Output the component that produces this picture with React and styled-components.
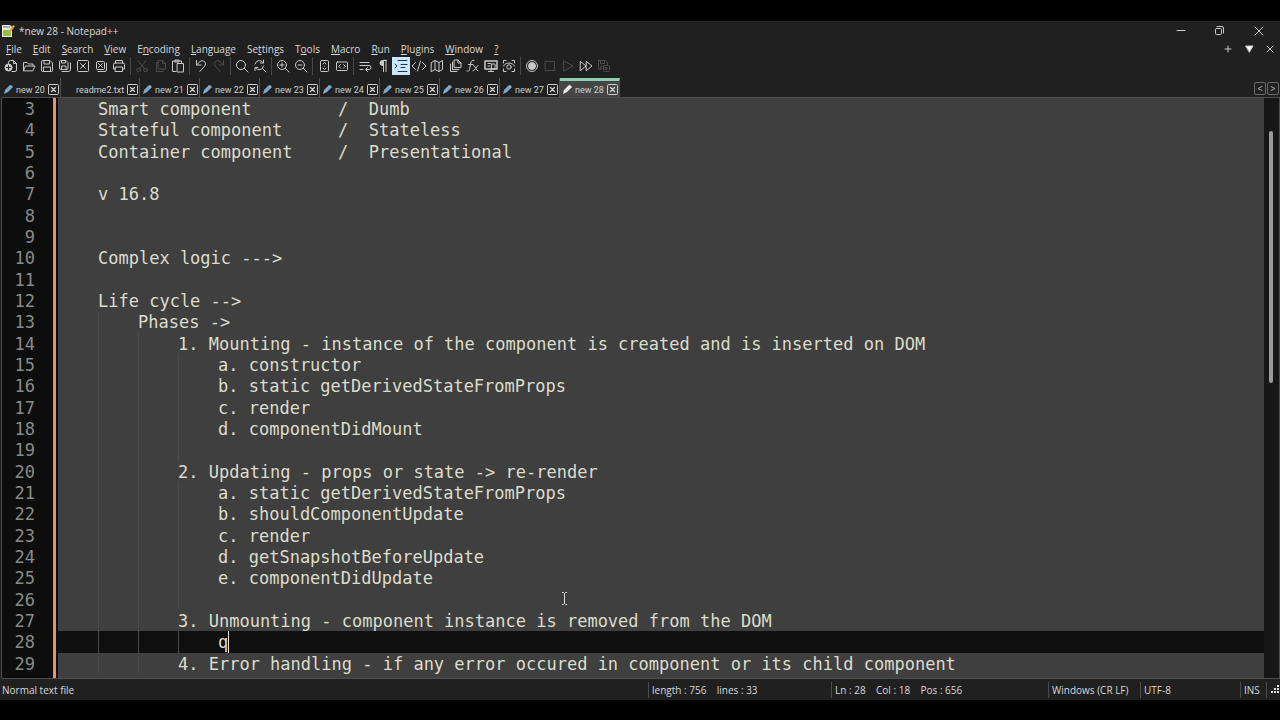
import React from 'react';
import styled, { createGlobalStyle, ThemeProvider, css } from 'styled-components';

const theme = {
    chrome: '#202020',
    text: '#d8d8d8',
    line: '#4d4d4d',
    paper: '#3f3f3f',
    ink: '#dcdccc',
    gutter: '#0d0d0d',
    number: '#8a8a86',
    accent: '#ec9550',
    ui: '"Open Sans", "Noto Sans", sans-serif',
    mono: '"DejaVu Sans Mono", "Liberation Mono", monospace',
}

const GlobalStyle = createGlobalStyle`
    * {
        box-sizing: border-box;
    }
    body {
        margin: 0;
        background: #000;
    }
    button {
        padding: 0;
        border: 0;
        background: none;
        color: inherit;
        font: inherit;
    }
`

const Screen = styled.div`
    display: flex;
    flex-direction: column;
    height: 100vh;
    padding: 21px 0 20px;
    overflow: hidden;
    color: ${p => p.theme.text};
    font-family: ${p => p.theme.ui};
    font-size: 10px;
`

const Window = styled.main`
    flex: 1;
    min-height: 0;
    display: flex;
    flex-direction: column;
    background: ${p => p.theme.chrome};
`

const Bar = styled.header`
    display: flex;
    flex: none;
    align-items: center;
    justify-content: space-between;
    height: ${p => p.h}px;
`

const Title = styled.h1`
    display: flex;
    align-items: center;
    gap: 4px;
    margin: 0;
    padding-left: 1px;
    font-size: 10px;
    font-weight: 400;
    line-height: 16px;
`

const Controls = styled.div`
    display: flex;
    align-items: center;
    gap: ${p => p.gap}px;
    padding-right: ${p => p.end}px;
`

const IconButton = styled.button`
    display: flex;
    align-items: center;
    justify-content: center;
    width: ${p => p.w || 18}px;
    height: 18px;
    color: ${p => p.$dim ? '#4c4c4c' : '#c9c9c9'};
    ${p => p.$active && css`
        background: #cce6ff;
        color: #223344;
    `}
`

const Menu = styled.nav`
    display: flex;
    gap: 11px;
    padding-left: 6px;
`

const MenuItem = styled.button`
    line-height: 14px;
`

const Toolbar = styled.div`
    display: flex;
    flex: none;
    align-items: center;
    height: 20px;
    padding-left: 2px;
`

const Group = styled.div`
    display: flex;
    & + & {
        margin-left: 2px;
        padding-left: 2px;
        border-left: 1px solid #484848;
    }
`

const TabBar = styled.div`
    display: flex;
    flex: none;
    align-items: flex-end;
    justify-content: space-between;
    height: 21px;
    padding-left: 1px;
`

const TabList = styled.div`
    display: flex;
`

const Tab = styled.div`
    display: flex;
    align-items: center;
    width: ${p => p.w}px;
    height: 19px;
    padding: 4px 1px 0 2px;
    border-right: 1px solid ${p => p.theme.line};
    color: #cfcfcf;
    font-family: Roboto, "Liberation Sans", sans-serif;
    ${p => p.$active && css`
        padding-top: 1px;
        border-top: 3px solid #8fd0b4;
        background: #454545;
    `}
`

const TabName = styled.button`
    display: flex;
    flex: 1;
    align-items: center;
    gap: 2px;
    font-size: 9px;
    line-height: 12px;
    white-space: nowrap;
`

const CloseTab = styled.button`
    display: flex;
    flex: none;
`

const Scrollers = styled.div`
    display: flex;
    gap: 1px;
    padding: 0 1px 2px 0;
`

const Scroller = styled.button`
    display: flex;
    align-items: center;
    justify-content: center;
    width: 12px;
    height: 13px;
    border: 1px solid #6a6a6a;
    border-radius: 2px;
    color: #a8a8a8;
`

const Editor = styled.section`
    position: relative;
    display: flex;
    flex: 1;
    min-height: 0;
    margin-left: 1px;
    border: 1px solid ${p => p.theme.line};
    background: ${p => p.theme.paper};
`

const Lines = styled.ol`
    display: grid;
    flex: 1;
    grid-auto-rows: minmax(0, 1fr);
    margin: 0;
    padding: 0 0 4px;
    list-style: none;
    background: linear-gradient(to right,
        ${p => p.theme.gutter} 51px,
        ${p => p.theme.accent} 51px,
        ${p => p.theme.accent} 54px,
        ${p => p.theme.gutter} 54px,
        ${p => p.theme.gutter} 56px,
        transparent 56px);
    font-family: ${p => p.theme.mono};
    font-size: 17px;
`

const Line = styled.li`
    display: flex;
    align-items: stretch;
    line-height: 23px;
    white-space: pre;
    tab-size: 40px;
`

const Num = styled.span`
    flex: none;
    width: 56px;
    padding-right: 23px;
    color: ${p => p.theme.number};
    text-align: right;
`

const Code = styled.code`
    display: flex;
    flex: 1;
    background: ${p => p.$current ? '#101010' : 'transparent'};
    color: ${p => p.theme.ink};
    font: inherit;
`

const Indent = styled.span`
    width: 40px;
    border-left: 1px solid transparent;
    & + & {
        border-color: #4a4a4a;
    }
`

const Caret = styled.span`
    width: 1px;
    background: #e8e8e8;
`

const ScrollTrack = styled.div`
    width: 15px;
    padding: 33px 5px 0;
    background: #171717;
`

const Thumb = styled.div`
    width: 4px;
    height: 46%;
    border-radius: 2px;
    background: #9b9b9b;
`

// mouse pointer, floats over the text
const Pointer = styled.svg`
    position: absolute;
    left: 559px;
    top: 494px;
`

const StatusBar = styled.footer`
    display: flex;
    flex: none;
    align-items: center;
    height: 21px;
    padding-top: 1px;
    line-height: 16px;
    white-space: pre;
`

const Status = styled.span`
    flex: ${p => p.w ? `0 0 ${p.w}px` : 1};
    padding-left: ${p => p.w ? 3 : 2}px;
    border-left: ${p => p.w ? `1px solid ${p.theme.line}` : 0};
`

const Svg = ({ size = 16, children, ...other }) => (
    <svg width={size} height={size} viewBox={`0 0 ${size} ${size}`} fill="none" stroke="currentColor"
        strokeWidth="1" strokeLinecap="round" strokeLinejoin="round" aria-hidden="true" {...other}>
        {children}
    </svg>
)

const ICONS = {
    New: <><path d="M5.5 6V4.5a2 2 0 0 1 2-2h3l3 3V12a1.5 1.5 0 0 1-1.5 1.5H9M10.5 2.5v3h3" /><circle cx="5.5" cy="9.5" r="3.5" fill="currentColor" /><path d="M5.5 7.5v4M3.5 9.5h4" stroke="#202020" /></>,
    Open: <path d="M2.5 12V4.5h3.5l1.500 1.500h4.500v2M2.500 12.500l2-4.500h9.500l-2 4.500z" />,
    Save: <path d="M2.500 3.500a1 1 0 0 1 1-1h7.500l2.500 2.500v7.500a1 1 0 0 1-1 1h-9a1 1 0 0 1-1-1zM5 2.500v3.500h5.500v-3.500M4.500 13.500v-4.500h7v4.500" />,
    SaveAll: <path d="M2.500 3.500a1 1 0 0 1 1-1h5.500l2 2v6a1 1 0 0 1-1 1h-6.500a1 1 0 0 1-1-1zM4.500 2.500v2.500h4v-2.500M4.500 11.500v-3.500h4.500v3.500M13.500 5v6.500a2 2 0 0 1-2 2h-6.500" />,
    Close: <><rect x="2.500" y="2.500" width="11" height="11" rx="1" /><path d="M5.500 5.500l5 5M10.500 5.500l-5 5" /></>,
    CloseAll: <><rect x="3.500" y="3.500" width="8" height="8" rx="1" /><path d="M5.500 5.500l4 4M9.500 5.500l-4 4M13.500 5v7a1.500 1.500 0 0 1-1.500 1.500h-7" /></>,
    Print: <><path d="M4.500 5v-2.500h7v2.500M4.500 11h-2v-4.500a1.500 1.500 0 0 1 1.500-1.500h8a1.500 1.500 0 0 1 1.500 1.500v4.500h-2" /><rect x="4.500" y="9" width="7" height="4.500" /></>,
    Cut: <><path d="M4 2.500l6 8M12 2.500l-6 8" /><circle cx="4.500" cy="12" r="1.800" /><circle cx="11.500" cy="12" r="1.800" /></>,
    Copy: <path d="M6.500 2.500h4l3 3v5.500h-7zM10.500 2.500v3h3M6.500 4.500h-2v9h6.500v-2.500" />,
    Paste: <><path d="M6 13.500h-3.500v-10.500h9v2M5 3v-1h4v2h-4z" /><rect x="7.500" y="5.500" width="6" height="8.500" /></>,
    Undo: <path d="M3.500 2.500v4.500h4.500M3.500 7l3.500-3.500a3.300 3.300 0 0 1 4.800 4.500l-5 5.500" />,
    Redo: <path d="M12.500 2.500v4.500h-4.500M12.500 7l-3.500-3.500a3.300 3.300 0 0 0-4.800 4.500l5 5.500" />,
    Find: <><circle cx="7" cy="7" r="4.500" /><path d="M10.300 10.300l3.700 3.700" /></>,
    Replace: <path d="M3 6a4.500 4.500 0 0 1 8-1.500M11.500 2v3h-3M11.500 8a4.500 4.500 0 0 1-8 2M3 12.500v-3h3M10.500 10.500l3.500 3.500" />,
    ZoomIn: <><circle cx="7" cy="7" r="4.500" /><path d="M10.300 10.300l3.700 3.700M7 5v4M5 7h4" /></>,
    ZoomOut: <><circle cx="7" cy="7" r="4.500" /><path d="M10.300 10.300l3.700 3.700M5 7h4" /></>,
    SyncV: <><rect x="4.500" y="2.500" width="8" height="11" rx="1" /><path d="M7 6l1.500-1.500 1.500 1.500M7 10l1.500 1.500 1.500-1.500M8.500 8h0" /></>,
    SyncH: <><rect x="2.500" y="4" width="11" height="8.500" rx="1" /><path d="M6.500 6.500l-1.800 1.800 1.800 1.800M9.500 6.500l1.800 1.800-1.800 1.800" /></>,
    Wrap: <path d="M3 4.500h9M3 7.500h9a2 2 0 0 1 0 4h-3M10.500 9.500l-2 2 2 2M3 11.500h3" />,
    Pilcrow: <><path d="M11.500 2.500h-4a2.500 2.500 0 0 0 0 5h1v-5z" fill="currentColor" /><path d="M8.500 2.500v11M11 2.500v11" /></>,
    Indent: <path d="M5 2.500h9M8 6.500h6M8 9.500h4M5 13.500h9M2 6l2 2-2 2" />,
    Tags: <path d="M4.500 4.500l-3.500 3.500 3.500 3.500M11.500 4.500l3.500 3.500-3.500 3.500M9.500 3l-3 10" />,
    Map: <path d="M2.500 4.500l3.500-2 4 2 3.500-2v9l-3.500 2-4-2-3.500 2zM6 2.500v9M10 4.500v9" />,
    Docs: <path d="M7.500 2h3.500l3 3v4.500h-6.500zM11 2v3h3M5.500 4v7.500h6.500M3.500 6v7.500h6.500" />,
    Func: <path d="M9 2.500c-2-.8-2.800.5-3.200 2.500l-1.300 6.500c-.3 1.500-1 2.200-2.500 1.500M3.500 6.500h4.500M8.500 7.500c2 0 2.500 5.500 4.500 5.500M13 7.500c-1.500 0-3 5.500-5 5.500" />,
    Monitor: <><rect x="2" y="3" width="12" height="8" strokeWidth="1.500" /><path d="M5 5.500h3M5 8h2M5.500 13.500h5M8 11v2.500" /><rect x="9" y="6" width="3" height="5" /></>,
    Watch: <><path d="M2.500 5v-2.500h2.500M11 2.500h2.500v2.500M13.500 11v2.500h-2.500M5 13.500h-2.500v-2.500M2.500 8c2-4 9-4 11 0" /><circle cx="8" cy="9" r="2.200" /></>,
    Record: <><circle cx="8" cy="8" r="5.500" /><circle cx="8" cy="8" r="3.500" fill="currentColor" /></>,
    Stop: <rect x="3.500" y="3.500" width="9" height="9" />,
    Play: <path d="M4 3l9 5-9 5z" />,
    Forward: <path d="M2.500 3.500l5.500 4.500-5.500 4.500zM8.500 3.500l5.500 4.500-5.500 4.500z" />,
    SaveMacro: <><path d="M2.500 2.500h7l2 2v2M2.500 2.500v8.500h3M4.500 2.500v3h4v-3M5 11v-3h2" /><rect x="7.500" y="7.500" width="6" height="6" rx="1" /><path d="M9.500 9.500l2 1-2 1z" /></>,
}

const TOOLS = [
    ['New', 'Open', 'Save', 'SaveAll', 'Close', 'CloseAll', 'Print'],
    ['Cut', 'Copy', 'Paste'],
    ['Undo', 'Redo'],
    ['Find', 'Replace'],
    ['ZoomIn', 'ZoomOut'],
    ['SyncV', 'SyncH'],
    ['Wrap', 'Pilcrow', 'Indent', 'Tags', 'Map', 'Docs', 'Func', 'Monitor', 'Watch'],
    ['Record', 'Stop', 'Play', 'Forward', 'SaveMacro'],
]
const DIM = ['Cut', 'Copy', 'Redo', 'Stop', 'Play', 'SaveMacro']

// [text, index of the underlined letter]
const MENU = [
    ['File', 0], ['Edit', 0], ['Search', 0], ['View', 0], ['Encoding', 1], ['Language', 0], ['Settings', 2],
    ['Tools', 1], ['Macro', 0], ['Run', 0], ['Plugins', 0], ['Window', 0], ['?', 0],
]

const TABS = ['new 20', 'readme2.txt', 'new 21', 'new 22', 'new 23', 'new 24', 'new 25', 'new 26', 'new 27', 'new 28']

const FIRST_LINE = 3
const CURRENT = 28
// [indent level, text]
const CODE = [
    [1, 'Smart component\t\t\t/  Dumb'],
    [1, 'Stateful component\t\t/  Stateless'],
    [1, 'Container component\t\t/  Presentational'],
    [0, ''],
    [1, 'v 16.8'],
    [0, ''],
    [0, ''],
    [1, 'Complex logic --->'],
    [0, ''],
    [1, 'Life cycle -->'],
    [2, 'Phases ->'],
    [3, '1. Mounting - instance of the component is created and is inserted on DOM'],
    [4, 'a. constructor'],
    [4, 'b. static getDerivedStateFromProps'],
    [4, 'c. render'],
    [4, 'd. componentDidMount'],
    [4, ''],
    [3, '2. Updating - props or state -> re-render'],
    [4, 'a. static getDerivedStateFromProps'],
    [4, 'b. shouldComponentUpdate'],
    [4, 'c. render'],
    [4, 'd. getSnapshotBeforeUpdate'],
    [4, 'e. componentDidUpdate'],
    [4, ''],
    [3, '3. Unmounting - component instance is removed from the DOM'],
    [4, 'q'],
    [3, '4. Error handling - if any error occured in component or its child component'],
]

const Logo = () => (
    <Svg size={14} stroke="none">
        <path d="M1 1h8l2 2v10H1z" fill="#e9ecdf" />
        <path d="M2 6h8v6H2z" fill="#8cc63f" />
        <path d="M2 2h7v2H2z" fill="#a9b0b4" />
        <path d="M12 1l2 1-5 7-2 1 0-2z" fill="#e2a23b" />
    </Svg>
)

const Pencil = ({ color }) => (
    <Svg size={11} stroke="none">
        <path d="M1 10l1-4 5-5q2 0 3 2l-5 5z" fill={color} />
    </Svg>
)

const MenuLabel = ({ text, at }) => (
    <MenuItem>{text.slice(0, at)}<u>{text[at]}</u>{text.slice(at + 1)}</MenuItem>
)

const FileTab = ({ name, active }) => {
    const plain = name === 'readme2.txt'
    return (
        <Tab w={plain ? 79 : 60} $active={active}>
            <TabName>
                <Pencil color={plain ? 'none' : active ? '#f0f0f0' : '#7fa9cc'} />
                {name}
            </TabName>
            <CloseTab aria-label={`Close ${name}`}>
                <Svg size={11}>
                    <rect x="0.5" y="0.5" width="10" height="10" rx="1" />
                    <path d="M3.500 3.500l4 4M7.500 3.500l-4 4" strokeWidth="1.300" />
                </Svg>
            </CloseTab>
        </Tab>
    )
}

export default function App() {
    return (
        <ThemeProvider theme={theme}>
            <GlobalStyle />
            <Screen>
                <Window>
                    <Bar h={20}>
                        <Title><Logo />*new 28 - Notepad++</Title>
                        <Controls gap={21} end={12}>
                            <IconButton aria-label="Minimize"><Svg><path d="M4 7.500h8" /></Svg></IconButton>
                            <IconButton aria-label="Restore"><Svg><rect x="3.500" y="5.500" width="6" height="6" rx="1" /><path d="M5 3.500h5a1.500 1.500 0 0 1 1.500 1.500v5" /></Svg></IconButton>
                            <IconButton aria-label="Close"><Svg><path d="M4 4l8 8M12 4l-8 8" /></Svg></IconButton>
                        </Controls>
                    </Bar>
                    <Bar h={15} as="div">
                        <Menu>
                            {MENU.map(([text, at]) => <MenuLabel key={text} text={text} at={at} />)}
                        </Menu>
                        <Controls gap={3} end={1}>
                            <IconButton aria-label="New tab"><Svg><path d="M5 8h6M8 5v6" /></Svg></IconButton>
                            <IconButton aria-label="Tab list"><Svg><path d="M5 5h7l-3.500 6z" fill="#fff" /></Svg></IconButton>
                            <IconButton aria-label="Close tab"><Svg><path d="M5 5l6 6M11 5l-6 6" /></Svg></IconButton>
                        </Controls>
                    </Bar>
                    <Toolbar>
                        {TOOLS.map(group => (
                            <Group key={group[0]}>
                                {group.map(name => (
                                    <IconButton key={name} aria-label={name} $dim={DIM.includes(name)} $active={name === 'Indent'}>
                                        <Svg>{ICONS[name]}</Svg>
                                    </IconButton>
                                ))}
                            </Group>
                        ))}
                    </Toolbar>
                    <TabBar>
                        <TabList>
                            {TABS.map(name => <FileTab key={name} name={name} active={name === 'new 28'} />)}
                        </TabList>
                        <Scrollers>
                            <Scroller aria-label="Scroll left"><Svg size={8}><path d="M6 1.500l-4 2 4 2" /></Svg></Scroller>
                            <Scroller aria-label="Scroll right"><Svg size={8}><path d="M2 1.500l4 2-4 2" /></Svg></Scroller>
                        </Scrollers>
                    </TabBar>
                    <Editor>
                        <Lines>
                            {CODE.map(([level, text], i) => {
                                const no = FIRST_LINE + i
                                return (
                                    <Line key={no}>
                                        <Num>{no}</Num>
                                        <Code $current={no === CURRENT}>
                                            {Array.from({ length: level }, (_, n) => <Indent key={n} />)}
                                            {text}
                                            {no === CURRENT && <Caret />}
                                        </Code>
                                    </Line>
                                )
                            })}
                        </Lines>
                        <ScrollTrack><Thumb /></ScrollTrack>
                        <Pointer width="7" height="13" viewBox="0 0 7 13" fill="none" stroke="#d8d8d8" aria-hidden="true">
                            <path d="M1 .5h1.500l1 1 1-1h1.500M3.500 1.500v10M1 12.500h1.500l1-1 1 1h1.500" />
                        </Pointer>
                    </Editor>
                    <StatusBar>
                        <Status>Normal text file</Status>
                        <Status w={183}>length : 756    lines : 33</Status>
                        <Status w={217}>Ln : 28    Col : 18    Pos : 656</Status>
                        <Status w={92}>Windows (CR LF)</Status>
                        <Status w={100}>UTF-8</Status>
                        <Status w={26}>INS</Status>
                        <Status w={14}>
                            <Svg size={10} stroke="none" fill="#e0e0e0">
                                <path d="M7 1h2v2H7zM4 4h2v2H4zM7 4h2v2H7zM1 7h2v2H1zM4 7h2v2H4zM7 7h2v2H7z" />
                            </Svg>
                        </Status>
                    </StatusBar>
                </Window>
            </Screen>
        </ThemeProvider>
    )
}
